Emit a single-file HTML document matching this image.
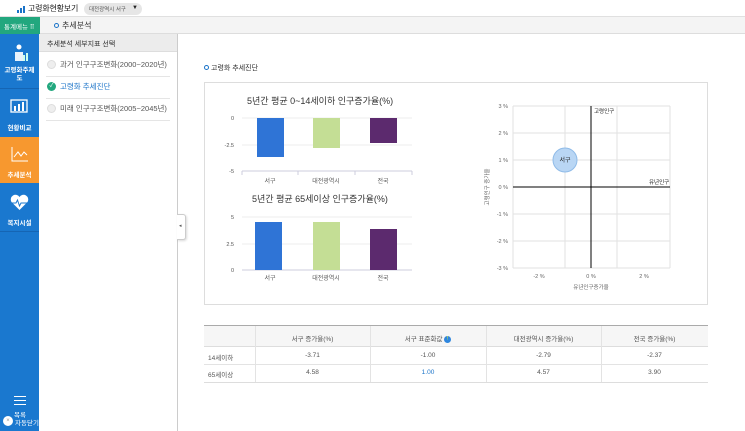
<!DOCTYPE html>
<html><head><meta charset="utf-8"><style>
*{margin:0;padding:0;box-sizing:border-box}
body{width:745px;height:431px;overflow:hidden;background:#fff;font-family:"Liberation Sans","Noto Sans CJK KR",sans-serif;position:relative;color:#333}
.a{position:absolute}
.t{position:absolute;white-space:nowrap}
</style></head><body>
<div class="a" style="left:0;top:0;width:745px;height:17px;background:#fff;border-bottom:1px solid #e0e0e0"></div>
<svg class="a" style="left:17px;top:6px" width="8" height="7"><rect x="0" y="4" width="2" height="3" fill="#1a73c8"/><rect x="3" y="2" width="2" height="5" fill="#1a73c8"/><rect x="6" y="0" width="2" height="7" fill="#1a73c8"/></svg>
<div class="t" style="left:28px;top:3px;font-size:8px;color:#222;letter-spacing:-0.2px">고령화현황보기</div>
<div class="a" style="left:84px;top:3px;width:58px;height:12px;background:#e6e6e6;border-radius:6px"></div>
<div class="t" style="left:89px;top:5px;font-size:5.5px;color:#555">대전광역시 서구</div>
<div class="t" style="left:132px;top:5px;font-size:6px;color:#222">▼</div>
<div class="a" style="left:0;top:17px;width:745px;height:17px;background:#f4f4f4;border-bottom:1px solid #ddd"></div>
<div class="a" style="left:0;top:17px;width:40px;height:17px;background:#22a77e"></div>
<div class="t" style="left:4px;top:21px;font-size:6.5px;color:#fff">통계메뉴 ⠿</div>
<div class="a" style="left:54px;top:23px;width:5px;height:5px;border:1.5px solid #1a73c8;border-radius:50%"></div>
<div class="t" style="left:62px;top:20px;font-size:8px;color:#333">추세분석</div>
<div class="a" style="left:0;top:34px;width:39px;height:397px;background:#1a78cf"></div>
<div class="a" style="left:0;top:88px;width:39px;height:1px;background:#1565b4"></div>
<div class="a" style="left:0;top:137px;width:39px;height:46px;background:#f7982f"></div>
<div class="a" style="left:0;top:231px;width:39px;height:1px;background:#1565b4"></div>
<svg class="a" style="left:12px;top:44px" width="16" height="18"><circle cx="7" cy="3" r="2.5" fill="#fff"/><path d="M3 8h8v9H3z" fill="#fff" opacity=".9"/><rect x="11" y="11" width="2" height="6" fill="#cfe"/><rect x="14" y="9" width="2" height="8" fill="#cfe"/></svg>
<div class="t" style="left:0;top:67px;width:39px;text-align:center;font-size:6.5px;color:#fff;font-weight:bold;line-height:8px;white-space:normal">고령화주제<br>도</div>
<svg class="a" style="left:10px;top:99px" width="18" height="14"><rect x="1" y="1" width="16" height="12" fill="none" stroke="#fff" stroke-width="1.3"/><rect x="4" y="7" width="2" height="5" fill="#fff"/><rect x="8" y="5" width="2" height="7" fill="#fff"/><rect x="12" y="3" width="2" height="9" fill="#fff"/></svg>
<div class="t" style="left:0;top:122px;width:39px;text-align:center;font-size:6.5px;color:#fff;font-weight:bold">현황비교</div>
<svg class="a" style="left:11px;top:146px" width="18" height="16"><path d="M1 1v14h16" fill="none" stroke="#fff" stroke-width="1"/><path d="M3 11l4-5 3 4 3-4 3 3" fill="none" stroke="#fff" stroke-width="1"/></svg>
<div class="t" style="left:0;top:169px;width:39px;text-align:center;font-size:6.5px;color:#fff;font-weight:bold">추세분석</div>
<svg class="a" style="left:10px;top:194px" width="19" height="17"><path d="M9.5 16L1.5 8A4.5 4.5 0 0 1 9.5 3A4.5 4.5 0 0 1 17.5 8Z" fill="#fff"/><path d="M2 9h4l1.5-3 2 6 1.5-3h6" fill="none" stroke="#1a78cf" stroke-width="1"/></svg>
<div class="t" style="left:0;top:217px;width:39px;text-align:center;font-size:6.5px;color:#fff;font-weight:bold">복지시설</div>
<div class="a" style="left:14px;top:396px;width:12px;height:1px;background:#fff"></div>
<div class="a" style="left:14px;top:400px;width:12px;height:1px;background:#fff"></div>
<div class="a" style="left:14px;top:404px;width:12px;height:1px;background:#fff"></div>
<div class="t" style="left:14px;top:409px;font-size:6.5px;color:#fff">목록</div>
<div class="a" style="left:3px;top:416px;width:10px;height:10px;border-radius:50%;background:#fff;color:#999;font-size:6px;text-align:center;line-height:10px">×</div>
<div class="t" style="left:15px;top:417px;font-size:6.5px;color:#fff">자동닫기</div>
<div class="a" style="left:39px;top:34px;width:139px;height:18px;background:#ececec;border-bottom:1px solid #ddd"></div>
<div class="t" style="left:47px;top:39px;font-size:7px;color:#333">추세분석 세부지표 선택</div>
<div class="a" style="left:177px;top:34px;width:1px;height:397px;background:#ccc"></div>
<div class="a" style="left:177px;top:214px;width:9px;height:26px;background:#fff;border:1px solid #ccc;border-left:none;border-radius:0 3px 3px 0;box-shadow:1px 1px 2px rgba(0,0,0,.15)"></div>
<div class="t" style="left:179px;top:223px;font-size:5px;color:#555">◂</div>
<div class="a" style="left:47px;top:60px;width:9px;height:9px;border-radius:50%;background:#eee;border:1px solid #ddd"></div>
<div class="t" style="left:60px;top:59px;font-size:7.5px;color:#555">과거 인구구조변화(2000~2020년)</div>
<div class="a" style="left:46px;top:76px;width:124px;height:1px;background:#e5e5e5"></div>
<div class="a" style="left:47px;top:82px;width:9px;height:9px;border-radius:50%;background:#22a77e;color:#fff;font-size:6px;line-height:9px;text-align:center">✓</div>
<div class="t" style="left:60px;top:81px;font-size:7.5px;color:#1a73c8">고령화 추세진단</div>
<div class="a" style="left:46px;top:98px;width:124px;height:1px;background:#e5e5e5"></div>
<div class="a" style="left:47px;top:104px;width:9px;height:9px;border-radius:50%;background:#eee;border:1px solid #ddd"></div>
<div class="t" style="left:60px;top:103px;font-size:7.5px;color:#555">미래 인구구조변화(2005~2045년)</div>
<div class="a" style="left:46px;top:120px;width:124px;height:1px;background:#e5e5e5"></div>
<div class="a" style="left:204px;top:65px;width:5px;height:5px;border:1.5px solid #1a73c8;border-radius:50%"></div>
<div class="t" style="left:211px;top:63px;font-size:7px;color:#333">고령화 추세진단</div>
<div class="a" style="left:204px;top:82px;width:504px;height:223px;border:1px solid #ddd"></div>
<svg class="a" style="left:204px;top:82px" width="504" height="223" font-family="Liberation Sans,Noto Sans CJK KR,sans-serif">
<text x="43" y="22" font-size="9" fill="#333">5년간 평균 0~14세이하 인구증가율(%)</text>
<g font-size="5.5" fill="#555" text-anchor="end"><text x="30" y="38">0</text><text x="30" y="65">-2.5</text><text x="30" y="91">-5</text></g>
<line x1="38" y1="36" x2="208" y2="36" stroke="#eee"/><line x1="38" y1="63" x2="208" y2="63" stroke="#eee"/><line x1="38" y1="89" x2="208" y2="89" stroke="#ccd"/>
<rect x="53" y="36" width="27" height="39" fill="#2f74d6"/><rect x="109" y="36" width="27" height="30" fill="#c4de95"/><rect x="166" y="36" width="27" height="25" fill="#5c2a6e"/>
<g stroke="#ccd"><line x1="38" y1="89" x2="38" y2="93"/><line x1="94" y1="89" x2="94" y2="93"/><line x1="151" y1="89" x2="151" y2="93"/><line x1="208" y1="89" x2="208" y2="93"/></g>
<g font-size="6" fill="#555" text-anchor="middle"><text x="66" y="101">서구</text><text x="122" y="101">대전광역시</text><text x="179" y="101">전국</text></g>
<text x="48" y="120" font-size="9" fill="#333">5년간 평균 65세이상 인구증가율(%)</text>
<g font-size="5.5" fill="#555" text-anchor="end"><text x="30" y="137">5</text><text x="30" y="164">2.5</text><text x="30" y="190">0</text></g>
<line x1="38" y1="135" x2="208" y2="135" stroke="#eee"/><line x1="38" y1="162" x2="208" y2="162" stroke="#eee"/><line x1="38" y1="188" x2="208" y2="188" stroke="#ccd"/>
<rect x="51" y="140" width="27" height="48" fill="#2f74d6"/><rect x="109" y="140" width="27" height="48" fill="#c4de95"/><rect x="166" y="147" width="27" height="41" fill="#5c2a6e"/>
<g font-size="6" fill="#555" text-anchor="middle"><text x="66" y="198">서구</text><text x="122" y="198">대전광역시</text><text x="179" y="198">전국</text></g>
<g stroke="#e2e2e2"><line x1="309" y1="24" x2="309" y2="186"/><line x1="361" y1="24" x2="361" y2="186"/><line x1="413" y1="24" x2="413" y2="186"/><line x1="466" y1="24" x2="466" y2="186"/>
<line x1="309" y1="24" x2="466" y2="24"/><line x1="309" y1="51" x2="466" y2="51"/><line x1="309" y1="78" x2="466" y2="78"/><line x1="309" y1="132" x2="466" y2="132"/><line x1="309" y1="159" x2="466" y2="159"/><line x1="309" y1="186" x2="466" y2="186"/></g>
<line x1="387" y1="24" x2="387" y2="186" stroke="#000" stroke-width="1"/><line x1="309" y1="105" x2="466" y2="105" stroke="#000" stroke-width="1"/>
<circle cx="361" cy="78" r="12" fill="#b9d6f4" stroke="#8fbbe8"/>
<text x="361" y="80" font-size="6" fill="#222" text-anchor="middle">서구</text>
<text x="390" y="31" font-size="5.5" fill="#222">고령인구</text>
<text x="445" y="102" font-size="5.5" fill="#222">유년인구</text>
<g font-size="5.5" fill="#666" text-anchor="end"><text x="304" y="26">3 %</text><text x="304" y="53">2 %</text><text x="304" y="80">1 %</text><text x="304" y="107">0 %</text><text x="304" y="134">-1 %</text><text x="304" y="161">-2 %</text><text x="304" y="188">-3 %</text></g>
<g font-size="5.5" fill="#666" text-anchor="middle"><text x="335" y="196">-2 %</text><text x="387" y="196">0 %</text><text x="440" y="196">2 %</text><text x="387" y="207">유년인구증가율</text></g>
<text transform="translate(285,105) rotate(-90)" font-size="5.5" fill="#666" text-anchor="middle">고령인구 증가율</text>
</svg>
<div class="a" style="left:204px;top:325px;width:504px;height:1px;background:#aaa"></div>
<div class="a" style="left:204px;top:326px;width:504px;height:21px;background:#f6f6f6;border-bottom:1px solid #ddd"></div>
<div class="a" style="left:204px;top:364px;width:504px;height:1px;background:#e3e3e3"></div>
<div class="a" style="left:204px;top:382px;width:504px;height:1px;background:#ddd"></div>
<div class="a" style="left:255px;top:326px;width:1px;height:56px;background:#e3e3e3"></div>
<div class="a" style="left:370px;top:326px;width:1px;height:56px;background:#e3e3e3"></div>
<div class="a" style="left:486px;top:326px;width:1px;height:56px;background:#e3e3e3"></div>
<div class="a" style="left:601px;top:326px;width:1px;height:56px;background:#e3e3e3"></div>
<div style="position:absolute;left:0;top:0;font-size:6.5px;color:#555">
<div class="t" style="left:255px;top:333px;width:115px;text-align:center">서구 증가율(%)</div>
<div class="t" style="left:370px;top:333px;width:116px;text-align:center">서구 표준화값 <span style="display:inline-block;width:7px;height:7px;border-radius:50%;background:#2e86de;color:#ff0;font-size:5px;line-height:7px;text-align:center;vertical-align:middle">!</span></div>
<div class="t" style="left:486px;top:333px;width:115px;text-align:center">대전광역시 증가율(%)</div>
<div class="t" style="left:601px;top:333px;width:107px;text-align:center">전국 증가율(%)</div>
<div class="t" style="left:208px;top:352px">14세이하</div>
<div class="t" style="left:255px;top:352px;width:115px;text-align:center">-3.71</div>
<div class="t" style="left:370px;top:352px;width:116px;text-align:center">-1.00</div>
<div class="t" style="left:486px;top:352px;width:115px;text-align:center">-2.79</div>
<div class="t" style="left:601px;top:352px;width:107px;text-align:center">-2.37</div>
<div class="t" style="left:208px;top:369px">65세이상</div>
<div class="t" style="left:255px;top:369px;width:115px;text-align:center">4.58</div>
<div class="t" style="left:370px;top:369px;width:116px;text-align:center;color:#1a73c8">1.00</div>
<div class="t" style="left:486px;top:369px;width:115px;text-align:center">4.57</div>
<div class="t" style="left:601px;top:369px;width:107px;text-align:center">3.90</div>
</div>
</body></html>
